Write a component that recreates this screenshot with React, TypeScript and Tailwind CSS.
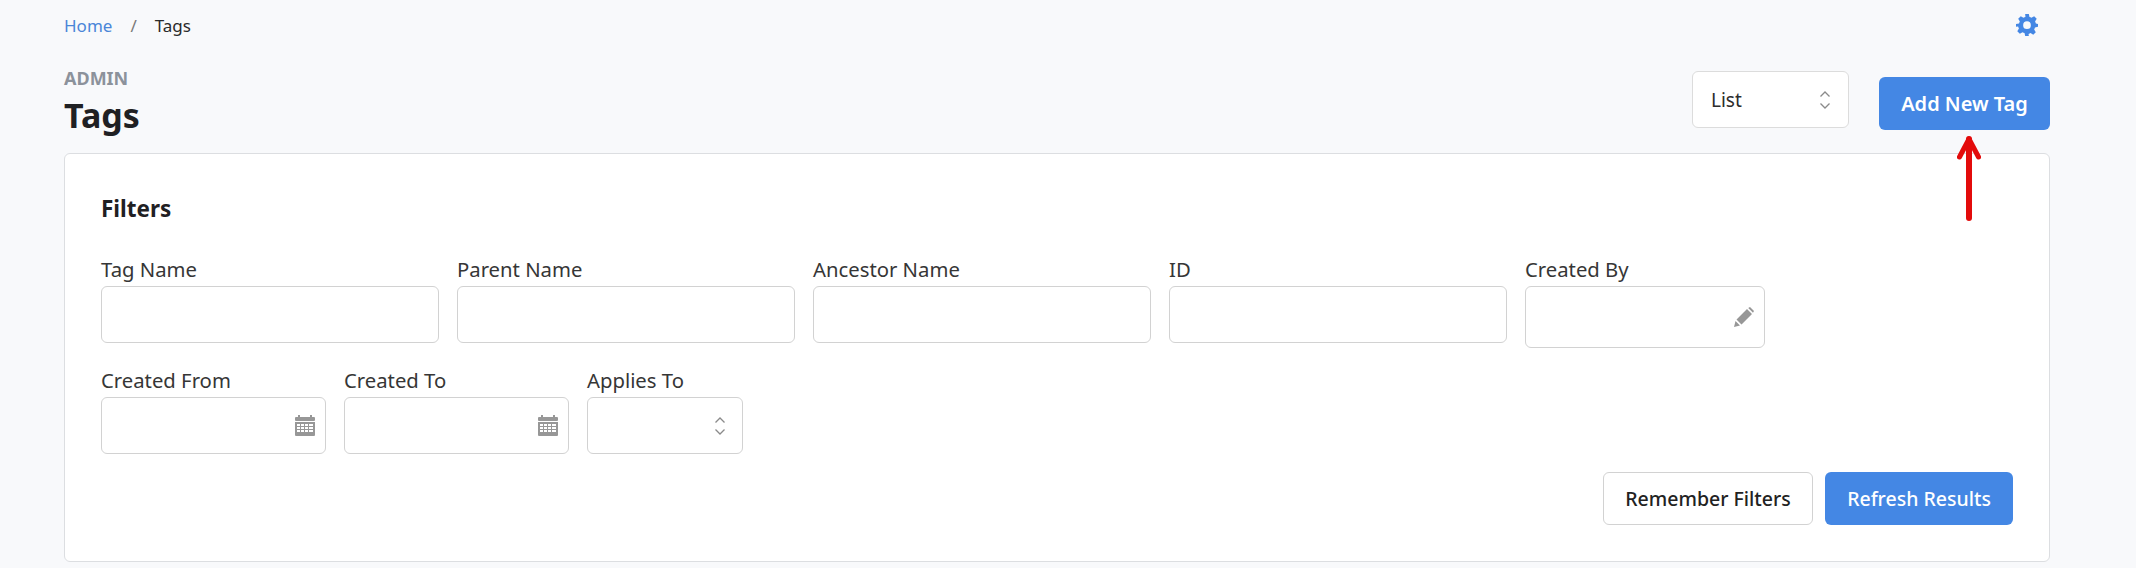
import React from "react";

const font = { fontFamily: '"Noto Sans", sans-serif' };

function Chevrons({ className = "" }: { className?: string }) {
  return (
    <svg className={className} width="12" height="20" viewBox="0 0 12 20" fill="none" stroke="#8a8a8a" strokeWidth="1.3">
      <path d="M1.500 6.500 6 2l4.500 4.500" />
      <path d="M1.500 13.500 6 18l4.500-4.500" />
    </svg>
  );
}

function Calendar() {
  return (
    <svg width="20" height="21" viewBox="0 0 20 21" fill="#979797">
      <rect x="3" y="0" width="2" height="3" />
      <rect x="15" y="0" width="2" height="3" />
      <rect x="0" y="2" width="20" height="4" rx="1" />
      <path fillRule="evenodd" d="M0 7h20v13a1 1 0 0 1-1 1H1a1 1 0 0 1-1-1zM2 9v2h3V9zm4 0v2h3V9zm4 0v2h3V9zm4 0v2h4V9zM2 12v2h3v-2zm4 0v2h3v-2zm4 0v2h3v-2zm4 0v2h4v-2zM2 15v2h3v-2zm4 0v2h3v-2zm4 0v2h3v-2zm4 0v2h4v-2z" />
    </svg>
  );
}

function Pencil() {
  return (
    <svg width="20" height="20" viewBox="0 0 20 20" fill="#979797">
      <path d="M0 20l1.500-6 4.500 4.500zM2.500 12.500 13 2l5 5L7.500 17.500zM14.200 1 16 0l4 4-1 1.800z" />
    </svg>
  );
}

function Gear() {
  return (
    <svg width="22" height="22" viewBox="0 0 24 24" fill="#4487e4">
      <path
        fillRule="evenodd"
        d="M10 0h4l.7 3.300c.8.200 1.500.500 2.200.900L19.800 2.400l2.800 2.800-1.800 2.900c.4.700.7 1.400.9 2.200L24 11v3l-3.300.7c-.2.800-.5 1.500-.9 2.200l1.800 2.900-2.800 2.800-2.900-1.800c-.7.400-1.400.7-2.200.9L14 24h-4l-.7-3.300c-.8-.2-1.500-.5-2.200-.9l-2.900 1.800-2.800-2.800 1.800-2.900c-.4-.7-.7-1.400-.9-2.200L0 14v-3l3.300-.7c.2-.8.500-1.500.9-2.200L2.400 5.200l2.800-2.800 2.900 1.800c.7-.4 1.400-.7 2.200-.9zM12 8a4.200 4.200 0 1 0 0 8.400A4.200 4.200 0 0 0 12 8z"
      />
    </svg>
  );
}

function Field({
  label,
  width,
  height = "h-[57px]",
  icon,
}: {
  label: string;
  width: string;
  height?: string;
  icon?: React.ReactNode;
}) {
  return (
    <div className={`flex flex-col ${width}`}>
      <label className="h-[27px] text-[20.3px] leading-[21px] text-[#363636] whitespace-nowrap">{label}</label>
      <div className={`flex items-center justify-end rounded-[6px] border border-[#d2d2d2] bg-white pr-[10px] ${height}`}>
        {icon}
      </div>
    </div>
  );
}

export default function App() {
  return (
    <div style={font} className="relative h-[568px] w-[2136px] overflow-hidden bg-[#f8f9fb] pl-[64px] pr-[86px]">
      <div className="flex h-[52px] items-center justify-between">
        <nav className="flex items-center text-[17px] leading-[24px]">
          <span className="text-[#4a86d8]">Home</span>
          <span className="ml-[18px] text-[#7a7a7a]">/</span>
          <span className="ml-[18px] text-[#2a2a2a]">Tags</span>
        </nav>
        <div className="mr-[12px] mb-[2px]">
          <Gear />
        </div>
      </div>

      <div className="flex h-[101px] items-start justify-between">
        <div className="pt-[15px]">
          <div className="text-[18px] font-bold leading-[22px] text-[#8c929b]">ADMIN</div>
          <h1 className="text-[34px] font-bold leading-[52px] text-[#1f2023]">Tags</h1>
        </div>
        <div className="flex items-start pt-[19px]">
          <div className="flex h-[57px] w-[157px] items-center justify-between rounded-[6px] border border-[#dcdcdc] bg-white pl-[18px] pr-[17px]">
            <span className="pt-[2px] text-[19px] text-[#2c2c2c]">List</span>
            <Chevrons />
          </div>
          <button className="ml-[30px] mt-[6px] h-[53px] w-[171px] rounded-[6px] bg-[#4487e4] pt-[1px] text-[20px] font-semibold text-white">
            Add New Tag
          </button>
        </div>
      </div>

      <section className="h-[409px] rounded-[6px] border border-[#dcdee1] bg-white px-[36px] pt-[35px]">
        <h2 className="text-[22.5px] font-bold leading-[40px] text-[#1f2023]">Filters</h2>
        <div className="mt-[30px] flex gap-[18px]">
          <Field label="Tag Name" width="w-[338px]" />
          <Field label="Parent Name" width="w-[338px]" />
          <Field label="Ancestor Name" width="w-[338px]" />
          <Field label="ID" width="w-[338px]" />
          <Field label="Created By" width="w-[240px]" height="h-[62px]" icon={<Pencil />} />
        </div>
        <div className="mt-[22px] flex gap-[18px]">
          <Field label="Created From" width="w-[225px]" icon={<Calendar />} />
          <Field label="Created To" width="w-[225px]" icon={<Calendar />} />
          <Field label="Applies To" width="w-[156px]" icon={<Chevrons className="mr-[6px]" />} />
        </div>
        <div className="mt-[18px] flex justify-end gap-[12px]">
          <button className="h-[53px] w-[210px] rounded-[6px] border border-[#d2d2d2] bg-white text-[19.5px] font-medium text-[#222]">
            Remember Filters
          </button>
          <button className="h-[53px] w-[188px] rounded-[6px] bg-[#4487e4] text-[19.5px] font-medium text-white">
            Refresh Results
          </button>
        </div>
      </section>

      <svg className="absolute left-[1957px] top-[134px]" width="24" height="88" viewBox="0 0 24 88" fill="none" stroke="#e30b0b" strokeLinecap="round" strokeLinejoin="round">
        <path d="M12 5v79" strokeWidth="6" />
        <path d="M2.500 23 12 5l9.500 18" strokeWidth="5" />
      </svg>
    </div>
  );
}
